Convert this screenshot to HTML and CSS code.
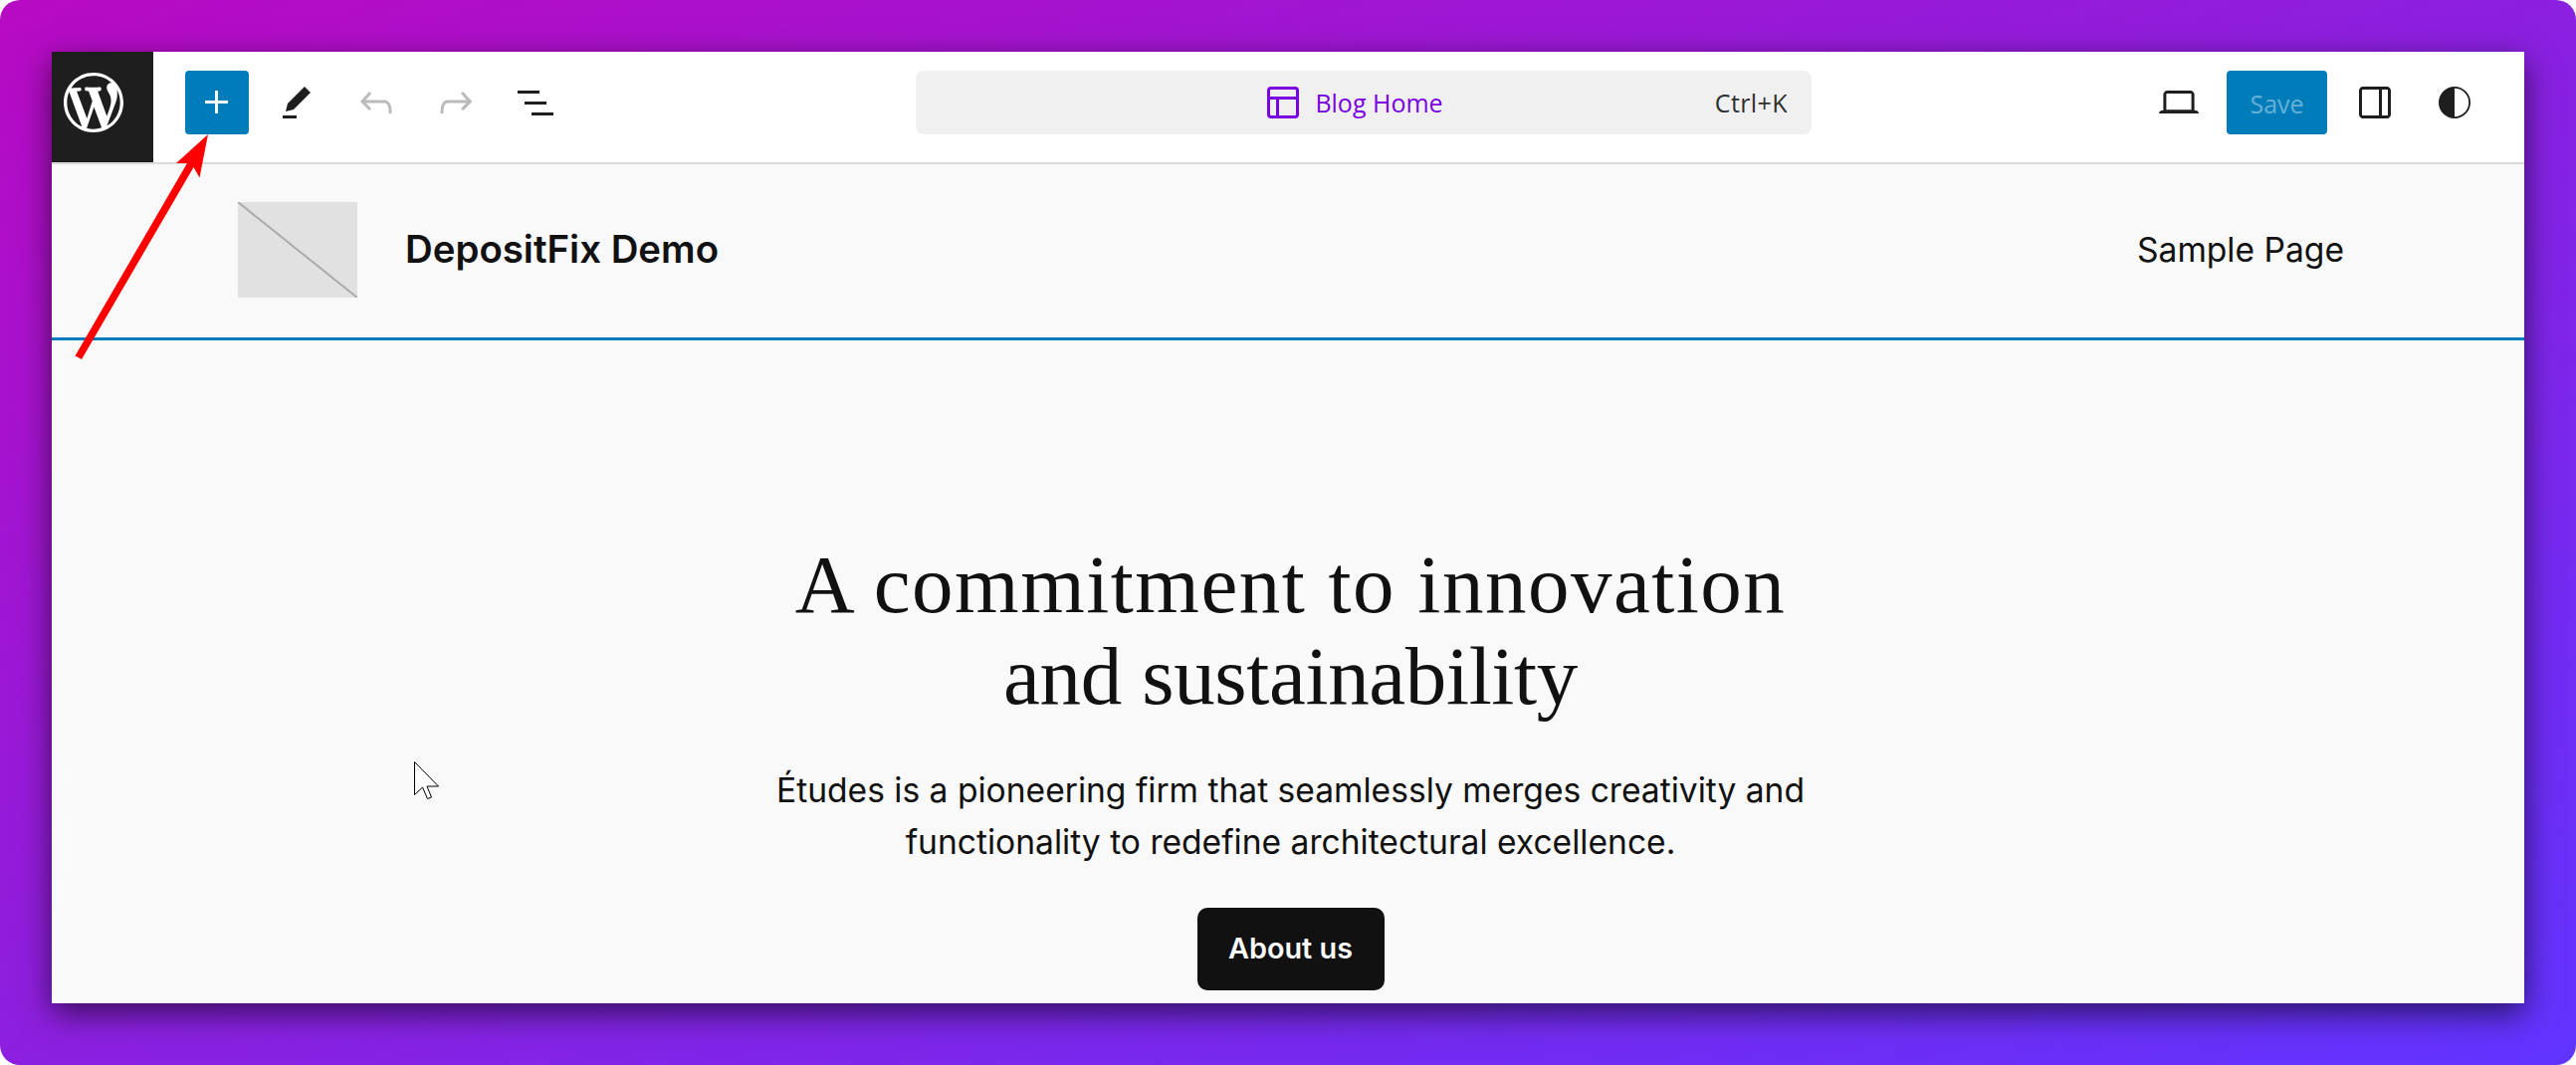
FILE: index.html
```html
<!DOCTYPE html>
<html lang="en">
<head>
    <meta charset="UTF-8">
    <meta name="viewport" content="width=device-width, initial-scale=1.0">
    <title>Blog Home - Editor</title>
    <link rel="stylesheet" href="styles.css">
</head>
<body>
<div class="backdrop">
    <div class="editor">
        <header class="toolbar">
            <a class="site-hub" href="#" aria-label="Open navigation">
                <svg viewBox="-2 -2 24 24"><path d="M20 10c0-5.51-4.49-10-10-10C4.48 0 0 4.49 0 10c0 5.52 4.48 10 10 10 5.51 0 10-4.48 10-10zM7.78 15.37L4.37 6.22c.55-.02 1.17-.08 1.17-.08.5-.06.44-1.13-.06-1.11 0 0-1.45.11-2.37.11-.18 0-.37 0-.58-.01C4.12 2.69 6.87 1.11 10 1.11c2.33 0 4.45.87 6.05 2.34-.68-.11-1.65.39-1.65 1.58 0 .74.45 1.36.9 2.1.35.61.55 1.36.55 2.46 0 1.49-1.4 5-1.4 5l-3.03-8.37c.54-.02.82-.17.82-.17.5-.05.44-1.25-.06-1.22 0 0-1.44.12-2.38.12-.87 0-2.33-.12-2.33-.12-.5-.03-.56 1.2-.06 1.22l.92.08 1.26 3.41zM17.41 10c.24-.64.74-1.87.43-4.25.7 1.29 1.05 2.71 1.05 4.25 0 3.29-1.73 6.24-4.4 7.78.97-2.59 1.94-5.2 2.92-7.78zM6.1 18.09C3.12 16.65 1.11 13.53 1.11 10c0-1.3.23-2.48.72-3.59C3.25 10.3 4.67 14.2 6.1 18.09zm4.03-6.63l2.58 6.98c-.86.29-1.76.45-2.71.45-.79 0-1.57-.11-2.29-.33.81-2.38 1.62-4.74 2.42-7.1z"/></svg>
            </a>
            <div class="tools tools-left">
                <button class="tool tool-primary" aria-label="Toggle block inserter">
                    <svg viewBox="0 0 24 24"><path d="M11 12.5V17.5H12.5V12.5H17.5V11H12.5V6H11V11H6V12.5H11Z"/></svg>
                </button>
                <button class="tool" aria-label="Tools">
                    <svg viewBox="0 0 24 24"><path d="m19 7-3-3-8.5 8.5-1 4 4-1L19 7Zm-7 11.5H5V20h7v-1.5Z"/></svg>
                </button>
                <button class="tool tool-disabled" aria-label="Undo">
                    <svg viewBox="0 0 24 24"><path d="M18.3 11.7c-.6-.6-1.4-.9-2.3-.9H6.7l2.9-3.3-1.1-1-4.5 5L8.5 16l1-1-2.7-2.7H16c.5 0 .9.2 1.3.5 1 1 1 3.4 1 4.5v.3h1.5v-.2c0-1.5 0-4.3-1.5-5.7z"/></svg>
                </button>
                <button class="tool tool-disabled" aria-label="Redo">
                    <svg viewBox="0 0 24 24"><path d="M15.6 6.5l-1.1 1 2.9 3.3H8c-.9 0-1.7.3-2.3.9-1.4 1.5-1.4 4.2-1.4 5.6v.2h1.5v-.3c0-1.1 0-3.5 1-4.5.3-.3.7-.5 1.3-.5h9.2L14.5 15l1.1 1.1 4.6-4.6-4.6-5z"/></svg>
                </button>
                <button class="tool" aria-label="List view">
                    <svg viewBox="0 0 24 24"><path d="M3 6h11v1.5H3V6Zm3.5 5.5h11V13h-11v-1.5ZM21 17H10v1.5h11V17Z"/></svg>
                </button>
            </div>
            <button class="document-bar">
                <span class="document-title">
                    <svg viewBox="0 0 24 24"><path d="M18 5.5H6a.5.5 0 00-.5.5v3h13V6a.5.5 0 00-.5-.5zm.5 5H10v8h8a.5.5 0 00.5-.5v-7.5zm-10 0h-3V18a.5.5 0 00.5.5h2.5v-8zM6 4h12a2 2 0 012 2v12a2 2 0 01-2 2H6a2 2 0 01-2-2V6a2 2 0 012-2z"/></svg>
                    <span class="document-name">Blog Home</span>
                </span>
                <span class="shortcut">Ctrl+K</span>
            </button>
            <div class="tools tools-right">
                <button class="tool" aria-label="View">
                    <svg viewBox="0 0 24 24"><path d="M20.5 16h-.7V8c0-1.1-.9-2-2-2H6.2c-1.1 0-2 .9-2 2v8h-.7c-.8 0-1.5.7-1.5 1.5h20c0-.8-.7-1.5-1.5-1.5zM5.7 8c0-.3.2-.5.5-.5h11.6c.3 0 .5.2.5.5v7.6H5.7V8z"/></svg>
                </button>
                <button class="save">Save</button>
                <button class="tool" aria-label="Settings">
                    <svg viewBox="0 0 24 24"><path d="M18 4H6c-1.1 0-2 .9-2 2v12c0 1.1.9 2 2 2h12c1.1 0 2-.9 2-2V6c0-1.1-.9-2-2-2zm-4 14.5H6c-.3 0-.5-.2-.5-.5V6c0-.3.2-.5.5-.5h8v13zm4.5-.5c0 .3-.2.5-.5.5h-2.5v-13H18c.3 0 .5.2.5.5v12z"/></svg>
                </button>
                <button class="tool" aria-label="Styles">
                    <svg viewBox="0 0 24 24"><path fill-rule="evenodd" d="M20 12a8 8 0 1 1-16 0 8 8 0 0 1 16 0Zm-.9 0a7.1 7.1 0 0 1-7.1 7.1V4.9a7.1 7.1 0 0 1 7.1 7.1Z"/></svg>
                </button>
            </div>
        </header>

        <div class="site-header">
            <div class="branding">
                <svg class="logo-placeholder" viewBox="0 0 120 96"><path d="M0 0L120 96"/></svg>
                <span class="site-title">DepositFix Demo</span>
            </div>
            <a class="nav-link" href="#">Sample Page</a>
        </div>

        <main class="hero">
            <h1><span class="line-one">A commitment to innovation</span><br><span class="line-two">and sustainability</span></h1>
            <p>Études is a pioneering firm that seamlessly merges creativity and<br>functionality to redefine architectural excellence.</p>
            <a class="hero-button" href="#">About us</a>
        </main>
    </div>

    <svg class="arrow" viewBox="0 0 140 235"><path d="M134 5L125.5 48.5L119.5 38L7 231L.5 227.5L113 34H102Z"/></svg>
    <svg class="pointer" viewBox="0 0 28 42"><path d="M1.5 1.5V34.5L9.5 27L14.5 38.5L18.5 37L14 26H25.5Z"/></svg>
</div>
</body>
</html>
```
FILE: styles.css
```css
* {
    margin: 0;
    padding: 0;
    box-sizing: border-box;
}

body {
    background: #fff;
    color: #111;
    font-family: 'Inter', sans-serif;
}

a {
    color: inherit;
    text-decoration: none;
}

button {
    border: 0;
    background: none;
    color: #1e1e1e;
    font-family: 'Open Sans', sans-serif;
}

svg {
    display: block;
    fill: currentColor;
}

.backdrop {
    position: relative;
    height: 1070px;
    padding: 52px 52px 62px;
    border-radius: 20px;
    background: linear-gradient(to bottom right, #b80ac3, #8c20e0 50%, #6134ff);
}

.editor {
    height: 956px;
    background: #f9f9f9;
    box-shadow: 0 10px 30px rgba(0, 0, 0, 0.6);
}

/* Toolbar */
.toolbar {
    display: grid;
    grid-template-columns: 102px 766px 900px 1fr;
    height: 113px;
    background: #fff;
    border-bottom: 2px solid #d9d9d9;
}

.site-hub {
    padding: 15px 0 0 6px;
    background: #1e1e1e;
    color: #fff;
}

.site-hub svg {
    width: 72px;
    height: 72px;
}

.tools {
    display: flex;
    gap: 16px;
    padding-top: 19px;
}

.tools-left {
    padding-left: 32px;
}

.tools-right {
    justify-content: flex-end;
    padding-right: 38px;
}

.tool {
    display: flex;
    align-items: center;
    justify-content: center;
    width: 64px;
    height: 64px;
}

.tool svg,
.document-title svg {
    width: 48px;
    height: 48px;
}

.tool-primary {
    background: #007cba;
    color: #fff;
    border-radius: 4px;
}

.tool-disabled {
    color: #bbb;
}

.document-bar {
    display: grid;
    grid-template-columns: 1fr auto 1fr;
    align-items: center;
    height: 64px;
    margin-top: 19px;
    padding-right: 24px;
    background: #f0f0f0;
    border-radius: 8px;
    font-size: 25px;
}

.document-title {
    grid-column: 2;
    display: flex;
    align-items: center;
    gap: 8px;
    margin-right: 1px;
    color: #7a00df;
}

.shortcut {
    justify-self: end;
    color: #2f2f2f;
    letter-spacing: 0.4px;
}

.save {
    width: 101px;
    height: 64px;
    padding-top: 2px;
    background: #007cba;
    border-radius: 4px;
    color: #66b0d6;
    font-size: 25px;
}

/* Site canvas */
.site-header {
    display: flex;
    align-items: center;
    justify-content: space-between;
    height: 177px;
    padding: 0 181px 2px 187px;
    border-bottom: 3px solid #007cba;
}

.branding {
    display: flex;
    align-items: center;
    gap: 48px;
}

.logo-placeholder {
    width: 120px;
    height: 96px;
    background: #e1e1e1;
    stroke: #aaa;
    stroke-width: 2;
}

.site-title {
    padding-bottom: 3px;
    font-size: 38.4px;
    font-weight: 600;
}

.nav-link {
    padding-bottom: 2px;
    font-size: 33.6px;
}

.hero {
    display: flex;
    flex-direction: column;
    align-items: center;
    padding-top: 199px;
    padding-left: 5px;
    text-align: center;
}

h1 {
    font-family: 'Liberation Serif', serif;
    font-size: 83px;
    font-weight: 400;
    line-height: 92px;
}

.line-one {
    letter-spacing: 1.5px;
}

.line-two {
    letter-spacing: -0.35px;
}

.hero p {
    margin-top: 43px;
    font-size: 33.6px;
    line-height: 52px;
}

.hero-button {
    display: flex;
    align-items: center;
    justify-content: center;
    width: 188px;
    height: 83px;
    margin-top: 40px;
    padding-bottom: 2px;
    background: #111;
    border-radius: 10px;
    color: #f9f9f9;
    font-size: 28.8px;
    font-weight: 600;
}

/* Annotations over the window */
.arrow {
    position: absolute;
    left: 75px;
    top: 130px;
    width: 140px;
    height: 235px;
    fill: #f00;
}

.pointer {
    position: absolute;
    left: 415px;
    top: 764px;
    width: 28px;
    height: 42px;
    fill: #fff;
    stroke: #000;
    stroke-width: 1;
}
```
